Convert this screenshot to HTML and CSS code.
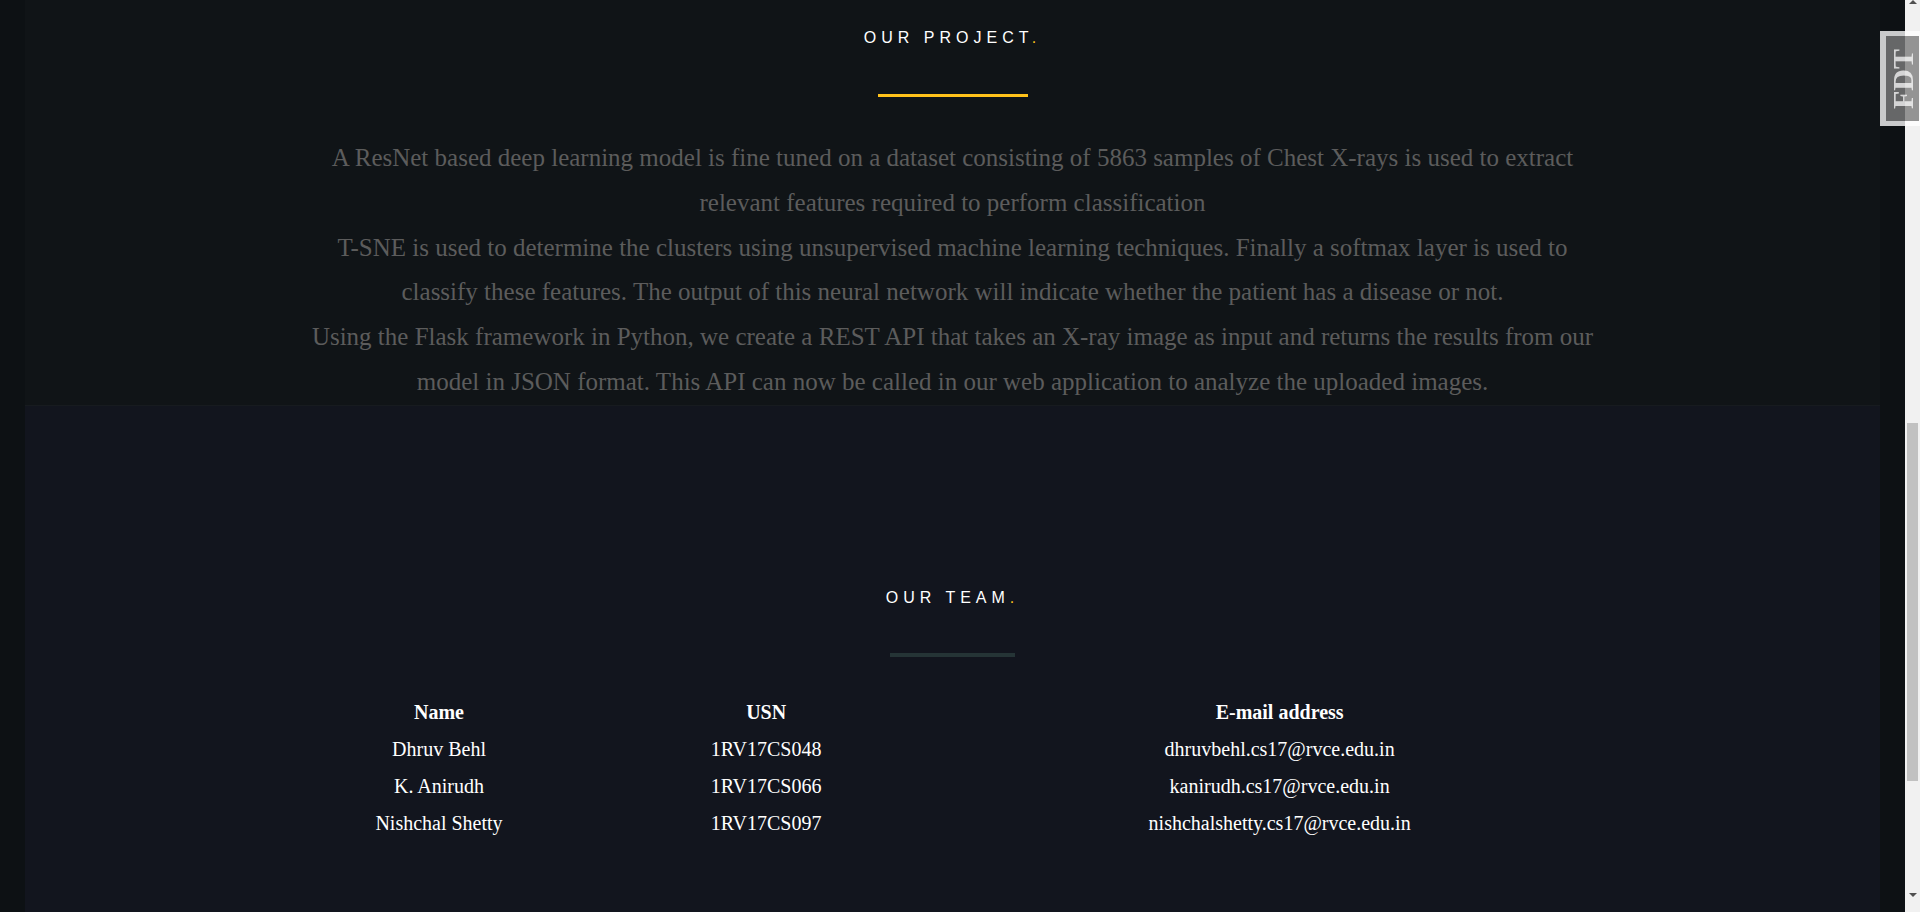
FILE: index.html
```html
<!DOCTYPE html>
<html lang="en">
<head>
<meta charset="utf-8">
<title>Chest X-ray Classification</title>
<link rel="stylesheet" href="styles.css">
</head>
<body>
<div class="window">
  <main class="page">
    <section class="section section-project">
      <h2 class="section-title">OUR PROJECT<span class="dot">.</span></h2>
      <div class="bar bar-yellow"></div>
      <p class="project-text">
        A ResNet based deep learning model is fine tuned on a dataset consisting of 5863 samples of Chest X-rays is used to extract relevant features required to perform classification<br>
        T-SNE is used to determine the clusters using unsupervised machine learning techniques. Finally a softmax layer is used to classify these features. The output of this neural network will indicate whether the patient has a disease or not.<br>
        Using the Flask framework in Python, we create a REST API that takes an X-ray image as input and returns the results from our model in JSON format. This API can now be called in our web application to analyze the uploaded images.
      </p>
    </section>

    <section class="section section-team">
      <h2 class="section-title">OUR TEAM<span class="dot">.</span></h2>
      <div class="bar bar-dark"></div>
      <table class="team-table">
        <colgroup>
          <col class="col-name">
          <col class="col-usn">
          <col class="col-mail">
        </colgroup>
        <thead>
          <tr><th>Name</th><th>USN</th><th>E-mail address</th></tr>
        </thead>
        <tbody>
          <tr><td>Dhruv Behl</td><td>1RV17CS048</td><td>dhruvbehl.cs17@rvce.edu.in</td></tr>
          <tr><td>K. Anirudh</td><td>1RV17CS066</td><td>kanirudh.cs17@rvce.edu.in</td></tr>
          <tr><td>Nishchal Shetty</td><td>1RV17CS097</td><td>nishchalshetty.cs17@rvce.edu.in</td></tr>
        </tbody>
      </table>
    </section>
  </main>

  <div class="scrollbar" aria-hidden="true">
    <div class="sb-top"><span class="sb-arrow sb-arrow-up"></span></div>
    <div class="sb-thumb"></div>
    <div class="sb-bottom"><span class="sb-arrow sb-arrow-down"></span></div>
  </div>
</div>

<div class="fdt"><span class="fdt-text">FDT</span></div>
</body>
</html>
```

FILE: styles.css
```css
html, body {
  margin: 0;
  padding: 0;
  height: 100%;
  overflow: hidden;
}

body {
  background: #0d1114;
  font-family: "Liberation Serif", "Times New Roman", serif;
}

.window {
  display: flex;
  height: 100vh;
}

.page {
  flex: 1;
  display: flex;
  flex-direction: column;
  overflow: hidden;
}

.section {
  margin: 0 25px;
  display: flex;
  flex-direction: column;
  align-items: center;
}

.section-project {
  background: #101417;
  padding-top: 28px;
  border-bottom: 1px solid #171b1f;
}

.section-team {
  flex: 1;
  background: #12151e;
  padding-top: 182px;
}

.section-title {
  margin: 0;
  font-family: "Liberation Sans", Arial, sans-serif;
  font-weight: 400;
  font-size: 16px;
  line-height: 20px;
  letter-spacing: 5px;
  color: #ffffff;
}

.dot {
  color: #ffc21a;
}

.bar {
  width: 150px;
  height: 3px;
  margin-top: 46px;
}

.bar-yellow {
  background: #ffc21a;
}

.bar-dark {
  width: 125px;
  height: 4px;
  margin-top: 45px;
  background: #253436;
}

.project-text {
  width: 70%;
  margin: 39px 0 0;
  text-align: center;
  font-size: 25px;
  line-height: 44.8px;
  color: #5c5c5c;
}

.team-table {
  width: 70%;
  margin-top: 37px;
  border-collapse: collapse;
  table-layout: fixed;
  color: #ffffff;
  font-size: 20px;
  line-height: 23px;
}

.col-name { width: 271px; }
.col-usn { width: 382px; }
.col-mail { width: 643px; }

.team-table th,
.team-table td {
  padding: 7px 0;
  text-align: center;
}

.team-table th {
  font-weight: 700;
}

/* window scrollbar */
.scrollbar {
  width: 15px;
  flex: none;
  background: #f1f1f1;
  display: grid;
  grid-template-rows: 423px 358px 1fr;
}

.sb-top {
  display: flex;
  justify-content: center;
  align-items: flex-start;
}

.sb-bottom {
  display: flex;
  justify-content: center;
  align-items: flex-end;
  padding-bottom: 15px;
}

.sb-thumb {
  margin: 0 2px;
  background: #c1c1c1;
}

.sb-arrow {
  width: 0;
  height: 0;
  border-left: 4px solid transparent;
  border-right: 4px solid transparent;
}

.sb-arrow-up {
  border-bottom: 4px solid #505050;
}

.sb-arrow-down {
  border-top: 4px solid #505050;
}

/* FDT overlay badge */
.fdt {
  position: fixed;
  top: 31px;
  right: 0;
  width: 40px;
  height: 95px;
  box-sizing: border-box;
  border-style: solid;
  border-width: 5px 1px 5px 6px;
  border-color: rgba(255, 255, 255, 0.78);
  background: rgba(125, 125, 125, 0.8);
  background-clip: padding-box;
  display: flex;
  align-items: center;
  justify-content: center;
  z-index: 10;
}

.fdt-text {
  writing-mode: vertical-rl;
  transform: rotate(180deg);
  font-family: "Liberation Serif", "Times New Roman", serif;
  font-weight: 700;
  font-size: 30px;
  line-height: 1;
  color: rgba(255, 255, 255, 0.72);
}
```
